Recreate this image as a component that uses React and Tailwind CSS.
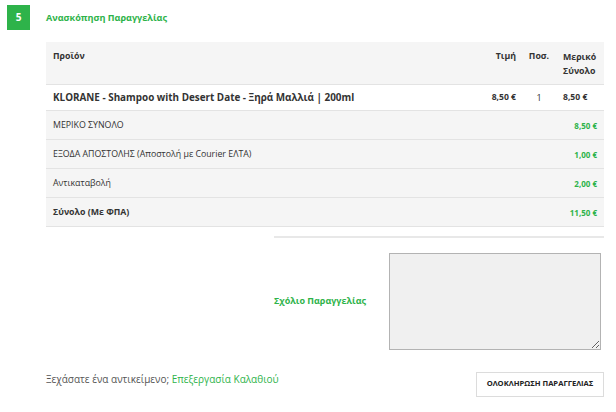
export default function App() {
  const font = { fontFamily: '"Open Sans", "Noto Sans", sans-serif' }
  return (
    <div className="w-[616px] h-[412px] bg-white text-[#333] relative" style={font}>
      <div className="flex items-center pt-[5px] pl-[7px]">
        <div className="w-[23px] h-[25px] bg-[#2eb34a] text-white text-[10px] font-bold flex items-center justify-center">5</div>
        <h2 className="ml-[16px] text-[9.1px] font-bold text-[#2eb34a]">Ανασκόπηση Παραγγελίας</h2>
      </div>

      <div className="ml-[46px] mt-[12px] w-[558px]">
        <table className="w-full border-collapse">
          <thead>
            <tr className="bg-[#f5f5f5] border-b border-[#e3e3e3] text-[8.8px] font-bold text-[#333] align-top">
              <th className="text-left pl-[7px] pt-[8px] h-[42px] font-bold">Προϊόν</th>
              <th className="text-right pt-[8px] w-[60px] pr-[4px] font-bold">Τιμή</th>
              <th className="text-center pt-[8px] w-[38px] font-bold">Ποσ.</th>
              <th className="text-left pt-[8px] pl-[5px] w-[46px] leading-[14px] font-bold">Μερικό<br />Σύνολο</th>
            </tr>
          </thead>
          <tbody>
            <tr className="border-b border-[#e3e3e3] h-[26px] font-bold">
              <td className="pl-[7px] pt-[1px] text-[9.9px]">KLORANE - Shampoo with Desert Date - Ξηρά Μαλλιά | 200ml</td>
              <td className="text-right pr-[4px] pt-[1px] text-[8.6px]">8,50 €</td>
              <td className="text-center pt-[1px] text-[9px] font-normal">1</td>
              <td className="pl-[5px] pt-[1px] text-[8.6px]">8,50 €</td>
            </tr>
            {[
              ['ΜΕΡΙΚΟ ΣΥΝΟΛΟ', '8,50 €', false],
              ['ΕΞΟΔΑ ΑΠΟΣΤΟΛΗΣ (Αποστολή με Courier ΕΛΤΑ)', '1,00 €', false],
              ['Αντικαταβολή', '2,00 €', false],
              ['Σύνολο (Με ΦΠΑ)', '11,50 €', true],
            ].map(([label, val, bold]) => (
              <tr key={label} className="bg-[#f5f5f5] border-b border-[#e3e3e3] h-[29px]">
                <td className={`pl-[7px] pt-[2px] text-[8.8px] ${bold ? 'font-bold' : ''}`}>{label}</td>
                <td colSpan={3} className="text-right pr-[7px] pt-[2px] text-[8px] font-bold text-[#2eb34a]">{val}</td>
              </tr>
            ))}
          </tbody>
        </table>
      </div>

      <div className="ml-[274px] mt-[9px] w-[330px] h-[2px] bg-[#e8e8e8]" />

      <div className="flex items-center ml-[274px] mt-[15px]">
        <label className="w-[115px] text-[9px] font-bold text-[#2eb34a]">Σχόλιο Παραγγελίας</label>
        <textarea className="w-[212px] h-[97px] bg-[#f0f0f0] border border-[#b3b3b3] outline-none" />
      </div>

      <div className="flex items-start justify-between pl-[46px] pr-[12px] mt-[22px]">
        <p className="text-[10px] leading-[14px] text-[#555]">
          Ξεχάσατε ένα αντικείμενο; <a className="text-[#2eb34a]">Επεξεργασία Καλαθιού</a>
        </p>
        <button className="h-[25px] w-[128px] border border-[#dcdcdc] text-[7.6px] font-bold text-[#222] bg-white">ΟΛΟΚΛΗΡΩΣΗ ΠΑΡΑΓΓΕΛΙΑΣ</button>
      </div>
    </div>
  )
}
